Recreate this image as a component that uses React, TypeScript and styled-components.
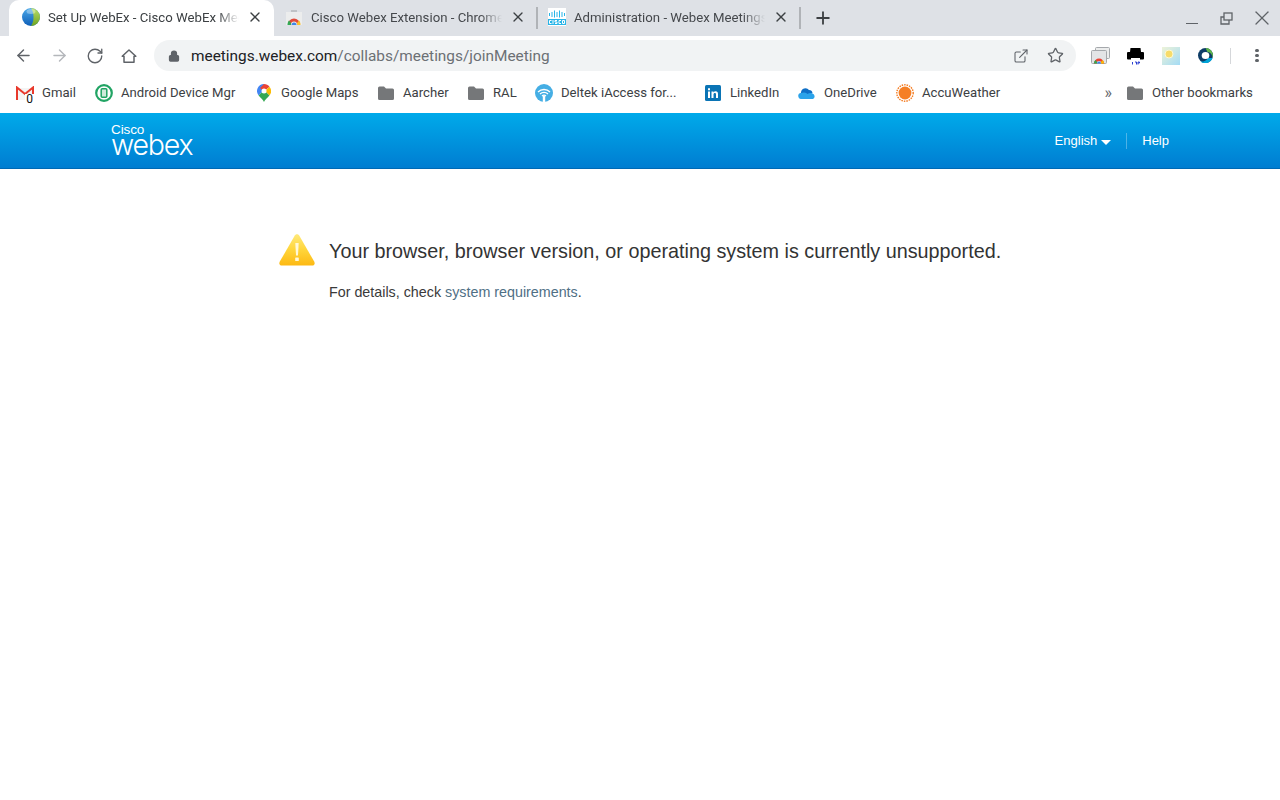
import React from 'react'
import styled, { createGlobalStyle } from 'styled-components'
import { ArrowLeft, ArrowRight, RotateCw, Lock, Star, X, Plus, ExternalLink } from 'lucide-react'

const Global = createGlobalStyle`
  html, body { margin: 0; padding: 0; background: #fff; }
  body { width: 1280px; height: 800px; overflow: hidden; font-family: "Roboto", "Liberation Sans", sans-serif; }
`

const GlobeIcon = () => (
  <svg width="18" height="18" viewBox="0 0 18 18">
    <defs>
      <linearGradient id="globeL" x1="0" y1="0" x2="0" y2="1">
        <stop offset="0" stopColor="#4aa8e8" />
        <stop offset="1" stopColor="#0f5fb8" />
      </linearGradient>
      <linearGradient id="globeR" x1="0" y1="0" x2="0" y2="1">
        <stop offset="0" stopColor="#b8dc6a" />
        <stop offset="1" stopColor="#6fa520" />
      </linearGradient>
    </defs>
    <circle cx="9" cy="9" r="9" fill="url(#globeL)" />
    <path d="M9 0a9 9 0 0 1 0 18c2-3 2.500-6 2.500-9S11 3 9 0z" fill="url(#globeR)" />
    <ellipse cx="9" cy="3.500" rx="4.500" ry="2.500" fill="#fff" opacity=".35" />
  </svg>
)

const StoreIcon = () => (
  <svg width="16" height="16" viewBox="0 0 16 16">
    <path d="M5 3V1h6v2" fill="#bfc2c6" />
    <rect x="0" y="3" width="16" height="13" fill="#eceded" />
    <path d="M2 15.500a6 6 0 0 1 12 0h-3a3 3 0 0 0-6 0z" fill="#e04a3a" />
    <path d="M1.500 16c0-2 .5-3.500 1.500-4.500L5 14v2z" fill="#34a853" />
    <path d="M11 16v-2l2-2.500c1 1 1.500 2.500 1.500 4.500z" fill="#fbc02d" />
    <path d="M5.500 16a2.500 2.500 0 0 1 5 0z" fill="#3f86e8" />
  </svg>
)

const CiscoIcon = () => (
  <svg width="18" height="18" viewBox="0 0 18 18">
    <rect width="18" height="18" fill="#fff" />
    <g stroke="#29b5e8" strokeWidth="1">
      <path d="M1.500 5v3M4 4v5M6.500 2.500v7M9 4v5M11.500 2.500v7M14 4v5M16.500 5v3" />
    </g>
    <rect x="0" y="11" width="18" height="6" fill="#29b5e8" />
    <g stroke="#fff" strokeWidth="1" fill="none">
      <path d="M3.500 12.500H1.500v3h2M5 12v4M9 12.500H7v1.500h2v1.500H7M13 12.500h-2v3h2M14.500 12.500h2v3h-2z" />
    </g>
  </svg>
)

const HomeIcon = () => (
  <svg width="16" height="16" viewBox="0 0 16 16" fill="none" stroke="#5f6368" strokeWidth="1.500">
    <path d="M1.200 8.200 8 2l6.800 6.200H13V14.300H3V8.200z" strokeLinejoin="round" />
  </svg>
)

const GmailIcon = () => (
  <svg width="18" height="14" viewBox="0 0 18 14">
    <path d="M1 2h16v12H1z" fill="#f4f4f4" />
    <path d="M1 14V1.500l8 6.500 8-6.500V14" fill="none" stroke="#e8392c" strokeWidth="2" />
  </svg>
)

const DeviceIcon = () => (
  <svg width="18" height="18" viewBox="0 0 18 18">
    <circle cx="9" cy="9" r="7.800" fill="#fff" stroke="#21a464" strokeWidth="2.200" />
    <rect x="6.200" y="4.700" width="5.600" height="8.600" rx="1" fill="#cfeadb" stroke="#21a464" strokeWidth="1.500" />
  </svg>
)

const MapsIcon = () => (
  <svg width="14" height="18" viewBox="0 0 14 18">
    <path d="M7 0a7 7 0 0 0-5.400 11.400L7 6z" fill="#4285f4" />
    <path d="M7 0c2.200 0 4.200 1 5.500 2.700L7 7.500 3 4z" fill="#ea4335" />
    <path d="M12.500 2.700A7 7 0 0 1 12.400 11.400L8 7z" fill="#fbbc05" />
    <path d="M1.600 11.400c2 2.300 4.400 4 5.400 6.600 1-2.600 3.400-4.300 5.400-6.600L7 6z" fill="#34a853" />
    <circle cx="7" cy="7" r="2.500" fill="#fff" />
  </svg>
)

const FolderIcon = () => (
  <svg width="16" height="14" viewBox="0 0 16 14">
    <path d="M0 2a1.500 1.500 0 0 1 1.500-1.500H6L8 2.500h6.500A1.500 1.500 0 0 1 16 4v8.500a1.500 1.500 0 0 1-1.500 1.500h-13A1.500 1.500 0 0 1 0 12.500z" fill="#757779" />
  </svg>
)

const WifiIcon = () => (
  <svg width="18" height="18" viewBox="0 0 18 18">
    <circle cx="9" cy="9" r="9" fill="#45aee4" />
    <g fill="none" stroke="#fff" strokeWidth="1.300">
      <path d="M3 8a8.500 8.500 0 0 1 12 0M5 10a5.700 5.700 0 0 1 8 0M7 12a3 3 0 0 1 4 0" />
    </g>
    <path d="M9 12v6" stroke="#fff" strokeWidth="2.400" />
  </svg>
)

const LinkedInIcon = () => (
  <svg width="16" height="16" viewBox="0 0 16 16">
    <rect width="16" height="16" rx="1.500" fill="#0a74b5" />
    <path d="M3 6.500h2V13H3zM3 3.300h2v2H3zM6.500 6.500h2v1c.5-.8 1.200-1.200 2.100-1.200 1.700 0 2.400 1 2.400 2.800V13h-2V9.500c0-1-.3-1.500-1.100-1.500-.9 0-1.400.6-1.400 1.600V13h-2z" fill="#fff" />
  </svg>
)

const CloudIcon = () => (
  <svg width="18" height="12" viewBox="0 0 18 12">
    <path d="M3 5.500A4.500 4.500 0 0 1 11 3a3.500 3.500 0 0 1 3.500 3L8 10 2 8z" fill="#0f6fc6" />
    <path d="M3.500 12A3 3 0 0 1 3 6c1 0 2-.5 3-.5 2 0 2.500 1 3.500 1.500 1.500-1 3-1.500 5-.5A3 3 0 0 1 15 12z" fill="#2ba3ea" />
  </svg>
)

const SunIcon = () => (
  <svg width="18" height="18" viewBox="0 0 18 18">
    <circle cx="9" cy="9" r="8.200" fill="none" stroke="#f47b20" strokeWidth="1.400" strokeDasharray="1.500 1" />
    <circle cx="9" cy="9" r="6.400" fill="#f57f25" />
  </svg>
)

const AppsExtIcon = () => (
  <svg width="19" height="17" viewBox="0 0 19 17">
    <rect x="4.500" y="0.500" width="14" height="11" rx="1" fill="#eceded" stroke="#a5a8ac" />
    <rect x="0.500" y="3.500" width="15" height="13" rx="1" fill="#e3e4e6" stroke="#a5a8ac" />
    <path d="M3 16.500a5 5 0 0 1 10 0h-2.500a2.500 2.500 0 0 0-5 0z" fill="#ea4335" />
    <path d="M3 16.500c0-1.500.5-2.500 1.500-3.500L6 15v1.500z" fill="#34a853" />
    <path d="M10 16.500V15l1.500-2c1 1 1.500 2 1.500 3.500z" fill="#fbbc05" />
    <path d="M6 16.500a2 2 0 0 1 4 0z" fill="#3f86e8" />
  </svg>
)

const PrinterIcon = () => (
  <svg width="17" height="18" viewBox="0 0 17 18">
    <path d="M3.500 1h10L14 5h2a1 1 0 0 1 1 1v5.500a1 1 0 0 1-1 1H1a1 1 0 0 1-1-1V6a1 1 0 0 1 1-1h2z" fill="#000" />
    <rect x="4" y="11" width="9" height="2" fill="#fff" />
    <path d="M5.500 15v2.500M8 15h1.500v2.500M11 17.500V15h1.500v1H11" stroke="#2a3fd0" strokeWidth="1" fill="none" />
  </svg>
)

const WeatherExtIcon = () => (
  <svg width="18" height="18" viewBox="0 0 18 18">
    <defs>
      <linearGradient id="sky" x1="0" y1="0" x2="1" y2="1">
        <stop offset="0" stopColor="#eef3d8" />
        <stop offset="1" stopColor="#a3dbf5" />
      </linearGradient>
    </defs>
    <rect width="18" height="18" fill="url(#sky)" />
    <circle cx="7" cy="7" r="4" fill="#f7dc6a" stroke="#fdf8d2" />
  </svg>
)

const WebexExtIcon = () => (
  <svg width="15" height="15" viewBox="0 0 15 15">
    <circle cx="7.500" cy="7.500" r="7.500" fill="#0d3c66" />
    <path d="M7.500 0a7.500 7.500 0 0 1 7 10 5.500 5.500 0 0 0-5-6z" fill="#5fb648" />
    <path d="M14.500 10a7.500 7.500 0 0 1-12 3.500C5 14 8 13 10 10z" fill="#00a5d9" />
    <ellipse cx="7.500" cy="7.500" rx="3.800" ry="3.600" fill="#fff" />
  </svg>
)

const WarningIcon = () => (
  <svg width="36" height="32" viewBox="0 0 36 32">
    <defs>
      <linearGradient id="warn" x1="0" y1="0" x2="0" y2="1">
        <stop offset="0" stopColor="#ffe97a" />
        <stop offset=".5" stopColor="#ffd53a" />
        <stop offset="1" stopColor="#fdb913" />
      </linearGradient>
    </defs>
    <path d="M15.800 1.600c1.100-1.900 3.300-1.900 4.400 0l15 26c1 1.800.2 3.900-2.200 3.900H3c-2.400 0-3.200-2.100-2.200-3.900z" fill="url(#warn)" />
    <path d="M16.300 9h3.400l-.7 12.500h-2z" fill="#fff8d8" />
    <rect x="16.200" y="23.500" width="3.600" height="3.600" rx=".6" fill="#fff8d8" />
  </svg>
)

const TabStrip = styled.div`
  height: 36px;
  background: #dee1e6;
  display: flex;
  align-items: flex-end;
  padding-left: 9px;
`
const Tab = styled.div<{ $active?: boolean; $w: number }>`
  width: ${p => p.$w}px;
  height: 36px;
  box-sizing: border-box;
  display: flex;
  align-items: center;
  padding: 0 ${p => (p.$active ? 11 : 10)}px 2px ${p => (p.$active ? 13 : 11)}px;
  gap: 8px;
  background: ${p => (p.$active ? '#fff' : 'transparent')};
  border-radius: 10px 10px 0 0;
  color: ${p => (p.$active ? '#3c4043' : '#45484c')};
  font-size: 13.200px;
  flex: none;
`
const TabDivider = styled.div`
  width: 2px;
  height: 22px;
  margin: 0 -1px 7px 0;
  background: #b0b3b7;
  flex: none;
`
const FavSlot = styled.span`
  width: 18px;
  height: 18px;
  display: flex;
  align-items: center;
  justify-content: center;
  flex: none;
`
const TabTitle = styled.span`
  flex: 1;
  min-width: 0;
  white-space: nowrap;
  overflow: hidden;
  mask-image: linear-gradient(to right, #000 calc(100% - 22px), transparent);
  -webkit-mask-image: linear-gradient(to right, #000 calc(100% - 22px), transparent);
`
const TabClose = styled(X)`
  flex: none;
  color: #3c4043;
`
const NewTab = styled(Plus)`
  flex: none;
  color: #3c4043;
  margin: 0 0 8px 13px;
`
const WindowControls = styled.div`
  margin-left: auto;
  align-self: flex-start;
  display: flex;
  align-items: center;
  gap: 17px;
  padding: 6px 6px 0 0;
  color: #5f6368;
`
const MinimizeMark = styled.span`
  width: 12.500px;
  height: 1.500px;
  margin: 11px 5px 0 0;
  background: #5f6368;
`
const RestoreMark = styled.svg`
  display: block;
`

const Toolbar = styled.div`
  height: 40px;
  display: flex;
  align-items: center;
  background: #fff;
  padding: 0 0 1px 14px;
  box-sizing: border-box;
`
const NavGroup = styled.div`
  display: flex;
  align-items: center;
  gap: 17px;
  color: #5f6368;
  width: 140px;
  flex: none;
`
const AddressBar = styled.div`
  width: 922px;
  height: 31px;
  border-radius: 16px;
  background: #f1f3f4;
  display: flex;
  align-items: center;
  padding: 0 12px 0 14px;
  box-sizing: border-box;
  flex: none;
  color: #5f6368;
`
const Url = styled.div`
  margin-left: 11px;
  font-size: 15.400px;
  color: #6c7074;
  flex: 1;
  white-space: nowrap;
`
const Host = styled.span`
  color: #202124;
`
const AddressActions = styled.div`
  display: flex;
  align-items: center;
  gap: 18px;
  color: #5f6368;
`
const Extensions = styled.div`
  display: flex;
  align-items: center;
  margin-left: 7px;
`
const ExtSlot = styled.span`
  width: 35px;
  display: flex;
  justify-content: center;
  align-items: center;
`
const ToolDivider = styled.span`
  width: 1px;
  height: 16px;
  background: #d5d7da;
  margin: 0 24px 0 7px;
`
const MoreDots = styled.span`
  display: flex;
  flex-direction: column;
  gap: 1.500px;
`
const Dot = styled.span`
  width: 3.500px;
  height: 3.500px;
  border-radius: 50%;
  background: #5f6368;
`

const BookmarkBar = styled.div`
  height: 37px;
  display: flex;
  align-items: center;
  background: #fff;
  padding: 0 0 4px 16px;
  box-sizing: border-box;
`
const Bookmark = styled.div<{ $w: number }>`
  width: ${p => p.$w}px;
  flex: none;
  display: flex;
  align-items: center;
  gap: 8px;
  font-size: 13.150px;
  color: #3c4043;
  white-space: nowrap;
`
const BookmarkFav = styled.span`
  position: relative;
  display: flex;
  width: 18px;
  height: 18px;
  align-items: center;
  justify-content: center;
  flex: none;
`
const Badge = styled.span`
  position: absolute;
  right: 0;
  bottom: -2px;
  padding: 0 1px;
  background: #fff;
  font-size: 12px;
  line-height: 10px;
  color: #111;
`
const Chevrons = styled.span`
  margin-left: auto;
  margin-right: 14px;
  font-size: 16px;
  color: #5f6368;
`

const Header = styled.header`
  height: 56px;
  box-sizing: border-box;
  background: linear-gradient(to bottom, #00aaea, #007dd1);
  border-bottom: 1px solid #0069b4;
  display: flex;
  align-items: center;
  padding: 0 111px 0 111px;
  color: #fff;
  font-family: "Liberation Sans", Arial, sans-serif;
`
const Logo = styled.div`
  display: flex;
  flex-direction: column;
  margin-top: -3px;
`
const LogoTop = styled.span`
  font-size: 13.500px;
  line-height: 11px;
  letter-spacing: -0.1px;
`
const LogoWord = styled.span`
  font-family: "Inter", "Liberation Sans", sans-serif;
  font-weight: 300;
  font-size: 28.500px;
  line-height: 20px;
  letter-spacing: -1.200px;
`
const HeaderNav = styled.nav`
  margin-left: auto;
  display: flex;
  align-items: center;
  font-size: 13px;
`
const Caret = styled.span`
  display: inline-block;
  width: 0;
  height: 0;
  margin: 3px 0 0 4px;
  border-left: 5px solid transparent;
  border-right: 5px solid transparent;
  border-top: 5px solid #fff;
`
const NavDivider = styled.span`
  width: 1px;
  height: 16px;
  margin: 0 15px;
  background: rgba(255, 255, 255, 0.3);
`

const Content = styled.main`
  font-family: "Liberation Sans", Arial, sans-serif;
  padding: 65px 0 0 279px;
`
const MessageRow = styled.div`
  display: flex;
  align-items: center;
  gap: 14px;
`
const Message = styled.h1`
  margin: 2px 0 0;
  font-size: 19.800px;
  font-weight: 400;
  color: #333;
`
const Details = styled.p`
  margin: 18px 0 0 50px;
  font-size: 14.300px;
  color: #3a3a3a;
`
const DetailsLink = styled.a`
  color: #4f6f85;
  text-decoration: none;
`

const App = () => {
  return (
    <>
      <Global />
      <TabStrip>
        <Tab $active $w={265}>
          <FavSlot><GlobeIcon /></FavSlot>
          <TabTitle>Set Up WebEx - Cisco WebEx Meetings</TabTitle>
          <TabClose size={16} strokeWidth={2} />
        </Tab>
        <Tab $w={262}>
          <FavSlot><StoreIcon /></FavSlot>
          <TabTitle>Cisco Webex Extension - Chrome Web Store</TabTitle>
          <TabClose size={16} strokeWidth={2} />
        </Tab>
        <TabDivider />
        <Tab $w={262}>
          <FavSlot><CiscoIcon /></FavSlot>
          <TabTitle>Administration - Webex Meetings</TabTitle>
          <TabClose size={16} strokeWidth={2} />
        </Tab>
        <TabDivider />
        <NewTab size={20} strokeWidth={2.200} />
        <WindowControls>
          <MinimizeMark />
          <RestoreMark width="13" height="13" viewBox="0 0 13 13" fill="none" stroke="#5f6368" strokeWidth="1.300">
            <rect x="4" y="1" width="8" height="7" />
            <path d="M4 5H1v7h8V8" />
          </RestoreMark>
          <X size={24} strokeWidth={1.300} />
        </WindowControls>
      </TabStrip>

      <Toolbar>
        <NavGroup>
          <ArrowLeft size={19} strokeWidth={1.800} />
          <ArrowRight size={19} strokeWidth={1.800} color="#b4b7bb" />
          <RotateCw size={18} strokeWidth={1.800} />
          <HomeIcon />
        </NavGroup>
        <AddressBar>
          <Lock size={12} strokeWidth={2.500} fill="#5f6368" />
          <Url><Host>meetings.webex.com</Host>/collabs/meetings/joinMeeting</Url>
          <AddressActions>
            <ExternalLink size={16} strokeWidth={1.600} />
            <Star size={17} strokeWidth={1.800} />
          </AddressActions>
        </AddressBar>
        <Extensions>
          <ExtSlot><AppsExtIcon /></ExtSlot>
          <ExtSlot><PrinterIcon /></ExtSlot>
          <ExtSlot><WeatherExtIcon /></ExtSlot>
          <ExtSlot><WebexExtIcon /></ExtSlot>
          <ToolDivider />
          <MoreDots><Dot /><Dot /><Dot /></MoreDots>
        </Extensions>
      </Toolbar>

      <BookmarkBar>
        <Bookmark $w={79}><BookmarkFav><GmailIcon /><Badge>0</Badge></BookmarkFav>Gmail</Bookmark>
        <Bookmark $w={160}><BookmarkFav><DeviceIcon /></BookmarkFav>Android Device Mgr</Bookmark>
        <Bookmark $w={122}><BookmarkFav><MapsIcon /></BookmarkFav>Google Maps</Bookmark>
        <Bookmark $w={90}><BookmarkFav><FolderIcon /></BookmarkFav>Aarcher</Bookmark>
        <Bookmark $w={68}><BookmarkFav><FolderIcon /></BookmarkFav>RAL</Bookmark>
        <Bookmark $w={169}><BookmarkFav><WifiIcon /></BookmarkFav>Deltek iAccess for...</Bookmark>
        <Bookmark $w={94}><BookmarkFav><LinkedInIcon /></BookmarkFav>LinkedIn</Bookmark>
        <Bookmark $w={98}><BookmarkFav><CloudIcon /></BookmarkFav>OneDrive</Bookmark>
        <Bookmark $w={110}><BookmarkFav><SunIcon /></BookmarkFav>AccuWeather</Bookmark>
        <Chevrons>»</Chevrons>
        <Bookmark $w={154}><BookmarkFav><FolderIcon /></BookmarkFav>Other bookmarks</Bookmark>
      </BookmarkBar>

      <Header>
        <Logo>
          <LogoTop>Cisco</LogoTop>
          <LogoWord>webex</LogoWord>
        </Logo>
        <HeaderNav>
          English<Caret />
          <NavDivider />
          Help
        </HeaderNav>
      </Header>

      <Content>
        <MessageRow>
          <WarningIcon />
          <Message>Your browser, browser version, or operating system is currently unsupported.</Message>
        </MessageRow>
        <Details>
          For details, check <DetailsLink href="#">system requirements</DetailsLink>.
        </Details>
      </Content>
    </>
  )
}

export default App
